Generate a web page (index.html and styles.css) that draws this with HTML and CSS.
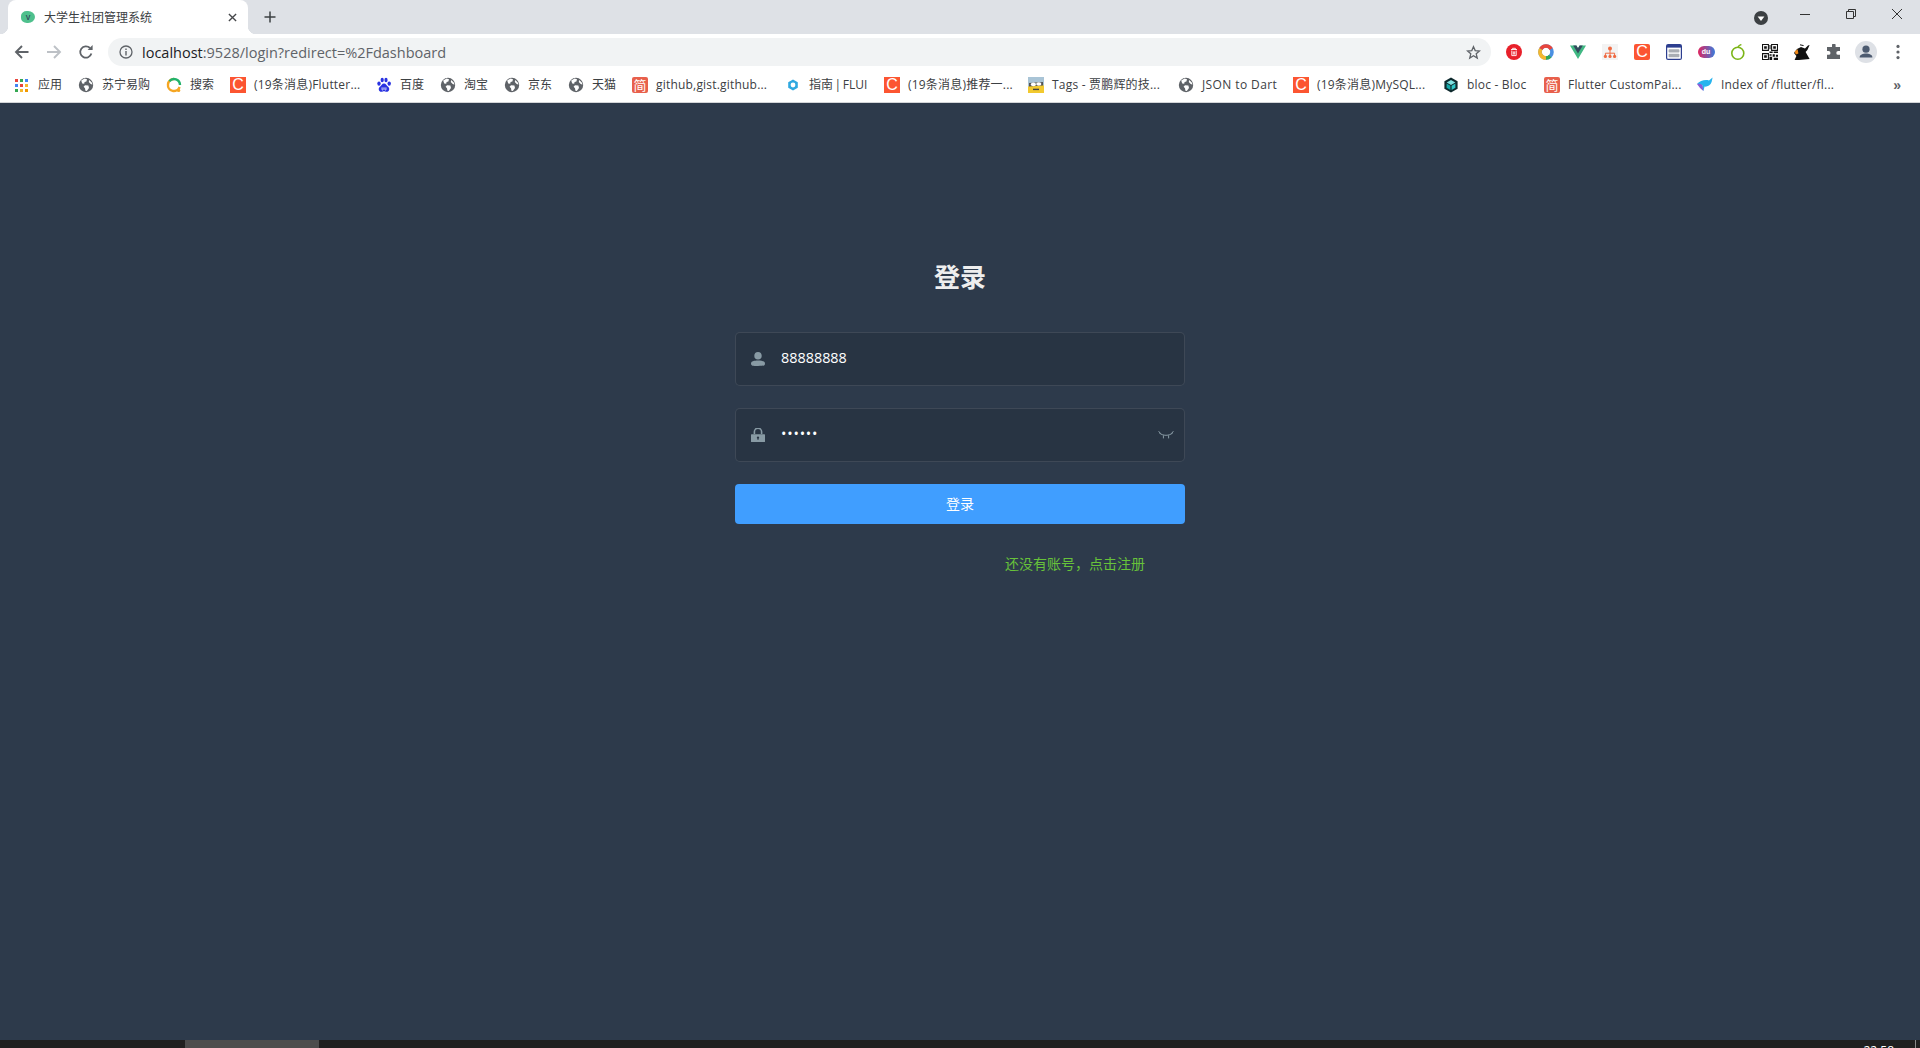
FILE: index.html
```html
<!DOCTYPE html>
<html lang="zh-CN">
<head>
<meta charset="utf-8">
<title>大学生社团管理系统</title>
<link rel="stylesheet" href="styles.css">
</head>
<body>
<svg class="defs" aria-hidden="true">
  <symbol id="globe" viewBox="0 0 16 16">
    <circle cx="8" cy="8" r="7.2" fill="#5f6368"/>
    <path d="M3.2 3.6 6.6 1.4 9 2.2 8.4 4.4 6.6 5 6.2 6.8 4.2 6.6ZM7 8.2 10.4 8.6 11 11 8.8 14 7.4 13.8 7 11.2 5.6 9.8ZM11.2 3 13.8 5.4 14.4 7.8 12.4 6.8 10.8 5Z" fill="#fff"/>
  </symbol>
</svg>
<div class="window">
  <header class="tabstrip">
    <div class="tab">
      <span class="favicon">V</span>
      <span class="tab-title">大学生社团管理系统</span>
      <svg class="tab-close" viewBox="0 0 10 10"><path d="M1 1 9 9M9 1 1 9" stroke="#45474a" stroke-width="1.5"/></svg>
    </div>
    <svg class="newtab" viewBox="0 0 12 12"><path d="M6 .5V11.5M.5 6H11.5" stroke="#3c4043" stroke-width="1.5"/></svg>
    <div class="strip-fill"></div>
    <div class="profile-dot"><svg viewBox="0 0 14 14"><circle cx="7" cy="7" r="7" fill="#3c4043"/><path d="M3.6 5.4H10.4L7 10Z" fill="#fff"/></svg></div>
    <div class="winbtn"><svg viewBox="0 0 10 10"><path d="M0 5.5H10" stroke="#333" stroke-width="1"/></svg></div>
    <div class="winbtn"><svg viewBox="0 0 10 10"><path d="M.5 2.5H7.5V9.5H.5ZM2.5 2.5V.5H9.5V7.5H7.5" fill="none" stroke="#333" stroke-width="1"/></svg></div>
    <div class="winbtn"><svg viewBox="0 0 10 10"><path d="M0 0 10 10M10 0 0 10" stroke="#333" stroke-width="1"/></svg></div>
  </header>

  <div class="toolbar">
    <div class="navbtn"><svg viewBox="0 0 16 16"><path d="M15.5 8H3M9 2 3 8 9 14" fill="none" stroke="#5f6368" stroke-width="1.9"/></svg></div>
    <div class="navbtn"><svg viewBox="0 0 16 16"><path d="M1 8H14M8 2 14 8 8 14" fill="none" stroke="#bdc1c6" stroke-width="1.9"/></svg></div>
    <div class="navbtn"><svg viewBox="0 0 16 16"><path d="M13.4 9.6A5.7 5.7 0 1 1 12 4" fill="none" stroke="#5f6368" stroke-width="1.8"/><path d="M9.6 6H14.6V1Z" fill="#5f6368"/></svg></div>
    <div class="omnibox">
      <svg class="info" viewBox="0 0 14 14"><circle cx="7" cy="7" r="6" fill="none" stroke="#5f6368" stroke-width="1.3"/><path d="M7 6V10.4M7 3.4V5" stroke="#5f6368" stroke-width="1.4"/></svg>
      <span class="url"><span class="host">localhost</span>:9528/login?redirect=%2Fdashboard</span>
      <svg class="star" viewBox="0 0 16 16"><path d="M8 1.8 9.8 6 14.4 6.4 10.9 9.4 12 13.9 8 11.5 4 13.9 5.1 9.4 1.6 6.4 6.2 6Z" fill="none" stroke="#5f6368" stroke-width="1.4"/></svg>
    </div>
    <div class="exts">
      <div class="ext"><svg viewBox="0 0 16 16"><circle cx="8" cy="8" r="8" fill="#e8202a"/><path d="M5 5.5H11M6.6 5.5V4.3H9.4V5.5M5.8 6.5V11.6H10.2V6.5M7.3 7.4V10.6M8.7 7.4V10.6" fill="none" stroke="#fff" stroke-width=".9"/></svg></div>
      <div class="ext"><svg viewBox="0 0 16 16"><circle cx="8" cy="8" r="6" fill="none" stroke="#4a90e2" stroke-width="3.6"/><path d="M2.8 5A6 6 0 0 1 13.2 5" fill="none" stroke="#e8453c" stroke-width="3.6"/><path d="M2.8 5A6 6 0 0 0 8 14" fill="none" stroke="#f5b82e" stroke-width="3.6"/><path d="M8 14A6 6 0 0 0 12.2 12.2" fill="none" stroke="#34a853" stroke-width="3.6"/></svg></div>
      <div class="ext"><svg viewBox="0 0 16 16"><path d="M0 1.5H6.4L8 4.2 9.6 1.5H16L8 15Z" fill="#41b883"/><path d="M3.2 1.5H6.4L8 4.2 9.6 1.5H12.8L8 9.6Z" fill="#35495e"/></svg></div>
      <div class="ext"><svg viewBox="0 0 16 16"><rect width="16" height="16" fill="#f3f3f3"/><path d="M8 6V9M3.4 12V9.2H12.6V12M8 9.2V12" fill="none" stroke="#ef6a42" stroke-width="1"/><circle cx="8" cy="4.4" r="2" fill="#ef6a42"/><circle cx="3.4" cy="12.4" r="1.6" fill="#ef6a42"/><circle cx="8" cy="12.4" r="1.6" fill="#ef6a42"/><circle cx="12.6" cy="12.4" r="1.6" fill="#ef6a42"/></svg></div>
      <div class="ext"><span class="csdn csdn-ext">C</span></div>
      <div class="ext"><svg viewBox="0 0 16 16"><rect x=".6" y=".6" width="14.8" height="14.8" rx="1.5" fill="#fff" stroke="#2c3e8f" stroke-width="1.2"/><rect x="1" y="1" width="14" height="2.6" fill="#2c3e8f"/><rect x="2.6" y="5.2" width="10.8" height="3.4" rx=".8" fill="#a9adb3"/><rect x="2.6" y="9.8" width="10.8" height="3.4" rx=".8" fill="#a9adb3"/></svg></div>
      <div class="ext"><span class="du">du</span></div>
      <div class="ext"><svg viewBox="0 0 16 16"><circle cx="7.8" cy="9.2" r="6" fill="none" stroke="#7cb518" stroke-width="1.6"/><path d="M8 3.4C8.4 2 9.4 1 11.4.6" fill="none" stroke="#7cb518" stroke-width="1.5"/></svg></div>
      <div class="ext"><svg viewBox="0 0 15 15"><path d="M.5.5H6V6H.5ZM9 .5H14.5V6H9ZM.5 9H6V14.5H.5Z" fill="none" stroke="#111" stroke-width="1"/><path d="M2 2H4.5V4.5H2ZM10.5 2H13V4.5H10.5ZM2 10.5H4.5V13H2ZM7 1H8V5H7ZM7 7H10V8.5H7ZM11 7H15V8.5H11ZM7 9.5H9V11H7ZM10 9.5H12V12H10ZM13 10H15V12H13ZM7 12H9.5V15H7ZM11 13H15V15H11Z" fill="#111"/></svg></div>
      <div class="ext"><svg viewBox="0 0 16 16"><path d="M0 9 3 5 7 3 11 4.6 14 1.6 15.6 1 13.4 6 11.6 8 15.6 15 5 16 .6 16 2.4 12Z" fill="#111"/><path d="M.6 7.6 3.6 5.2 4.4 9.4 1.8 10.6Z" fill="#ef8a1a"/><path d="M6 .8 9.6 1.6" stroke="#111" stroke-width="1"/></svg></div>
      <div class="ext"><svg viewBox="0 0 16 16"><path d="M6 1.2A1.8 1.8 0 0 1 9.6 1.2V3H14V7H12.2A1.9 1.9 0 0 0 12.2 10.8H14V15H1V10.8H2.6A1.9 1.9 0 0 0 2.6 7H1V3H6Z" fill="#5f6368"/></svg></div>
      <div class="ext"><span class="avatar"><svg viewBox="0 0 22 22"><circle cx="11" cy="8.2" r="3.6" fill="#4d5b70"/><path d="M4.6 16.4C4.6 13.4 8 12.4 11 12.4S17.4 13.4 17.4 16.4Z" fill="#4d5b70"/></svg></span></div>
      <div class="ext"><svg viewBox="0 0 4 16"><circle cx="2" cy="2.4" r="1.6" fill="#5f6368"/><circle cx="2" cy="8" r="1.6" fill="#5f6368"/><circle cx="2" cy="13.6" r="1.6" fill="#5f6368"/></svg></div>
    </div>
  </div>

  <nav class="bookmarks">
    <a class="bm"><svg class="bm-icon apps" viewBox="0 0 13 13"><g><rect width="3" height="3" fill="#e8453c"/><rect x="5" width="3" height="3" fill="#34a853"/><rect x="10" width="3" height="3" fill="#4285f4"/><rect y="5" width="3" height="3" fill="#4285f4"/><rect x="5" y="5" width="3" height="3" fill="#e8453c"/><rect x="10" y="5" width="3" height="3" fill="#f5b82e"/><rect y="10" width="3" height="3" fill="#34a853"/><rect x="5" y="10" width="3" height="3" fill="#f5b82e"/><rect x="10" y="10" width="3" height="3" fill="#f29900"/></g></svg><span class="bm-text w24">应用</span></a>
    <a class="bm"><svg class="bm-icon"><use href="#globe"/></svg><span class="bm-text w48">苏宁易购</span></a>
    <a class="bm"><svg class="bm-icon" viewBox="0 0 16 16"><path d="M8 2A6 6 0 1 0 13.6 10" fill="none" stroke="#f5a623" stroke-width="2.4"/><path d="M3.4 4.2A6 6 0 0 1 14 8" fill="none" stroke="#21b26b" stroke-width="2.4"/><circle cx="12.6" cy="13.4" r="1.7" fill="#f5a623"/></svg><span class="bm-text w24">搜索</span></a>
    <a class="bm"><span class="csdn">C</span><span class="bm-text latin w106">(19条消息)Flutter...</span></a>
    <a class="bm"><svg class="bm-icon" viewBox="0 0 16 16"><g fill="#2932e1"><ellipse cx="3" cy="6.6" rx="1.7" ry="2.2"/><ellipse cx="6.2" cy="3" rx="1.6" ry="2.3"/><ellipse cx="10" cy="3" rx="1.6" ry="2.3"/><ellipse cx="13.2" cy="6.6" rx="1.7" ry="2.2"/><path d="M8 6.4C10 6.4 10.6 8.6 12.4 10 14.2 11.8 13 15 10.6 14.8 9.4 14.7 9 14.2 8 14.2S6.6 14.7 5.4 14.8C3 15 1.8 11.8 3.6 10 5.4 8.6 6 6.4 8 6.4Z"/></g><path d="M6 10.4V12.4C6 13.4 7.2 13.4 7.2 12.4V10.4M8.8 10.4V12.4C8.8 13.4 10 13.4 10 12.4V10.4" stroke="#fff" stroke-width=".7" fill="none"/></svg><span class="bm-text w24">百度</span></a>
    <a class="bm"><svg class="bm-icon"><use href="#globe"/></svg><span class="bm-text w24">淘宝</span></a>
    <a class="bm"><svg class="bm-icon"><use href="#globe"/></svg><span class="bm-text w24">京东</span></a>
    <a class="bm"><svg class="bm-icon"><use href="#globe"/></svg><span class="bm-text w24">天猫</span></a>
    <a class="bm"><span class="jian">简</span><span class="bm-text latin w113">github,gist.github...</span></a>
    <a class="bm"><svg class="bm-icon" viewBox="0 0 16 16"><path d="M8 2.4 12.8 5.2V10.8L8 13.6 3.2 10.8V5.2Z" fill="#2fa8e0"/><circle cx="8" cy="8" r="2.4" fill="#fff"/></svg><span class="bm-text tight w59">指南 | FLUI</span></a>
    <a class="bm"><span class="csdn">C</span><span class="bm-text latin w104">(19条消息)推荐一...</span></a>
    <a class="bm"><svg class="bm-icon" viewBox="0 0 16 16"><rect width="16" height="16" fill="#a9c4d6"/><path d="M0 16V10C3 5 12 4 16 9V16Z" fill="#f2c92f"/><path d="M1 6 15 5V8.4L1 9.4Z" fill="#555"/><ellipse cx="5.4" cy="7.4" rx="2.6" ry="1.8" fill="#fff"/><ellipse cx="10.8" cy="7" rx="2.6" ry="1.8" fill="#fff"/><path d="M5 12.4H11" stroke="#444" stroke-width="1.4"/></svg><span class="bm-text latin w110">Tags - 贾鹏辉的技...</span></a>
    <a class="bm"><svg class="bm-icon"><use href="#globe"/></svg><span class="bm-text wide w75">JSON to Dart</span></a>
    <a class="bm"><span class="csdn">C</span><span class="bm-text latin w110">(19条消息)MySQL...</span></a>
    <a class="bm"><svg class="bm-icon" viewBox="0 0 16 16"><path d="M8 .4 14.6 4.2V11.8L8 15.6 1.4 11.8V4.2Z" fill="#0f2a2e"/><path d="M8 3 12.4 5.5 8 8 3.6 5.5Z" fill="#7fe3e3"/><path d="M3.6 6.6 7.4 8.8V13L3.6 10.8Z" fill="#14a9a9"/><path d="M12.4 6.6 8.6 8.8V13L12.4 10.8Z" fill="#2cc6c6"/></svg><span class="bm-text latin w61">bloc - Bloc</span></a>
    <a class="bm"><span class="jian">简</span><span class="bm-text latin w113">Flutter CustomPai...</span></a>
    <a class="bm"><svg class="bm-icon" viewBox="0 0 16 16"><path d="M0 7C3 3.4 8 2.4 12 3.4L15.6 .6 14.6 5C13.6 8.4 10 10 7.6 9.6L6.4 14C5 12 5 10 5.4 8.2 3.4 7.4 1.6 7 0 7Z" fill="#27b4ee"/><path d="M0 7C2 6.6 4 7 5.4 8.2L6.4 14C4 12 2 10 0 7Z" fill="#8a5cd6"/></svg><span class="bm-text latin w113">Index of /flutter/fl...</span></a>
    <span class="bm-more">»</span>
  </nav>

  <main class="login">
    <form class="login-form">
      <h3 class="title">登录</h3>
      <div class="field">
        <svg class="field-icon" viewBox="0 0 14 14"><ellipse cx="7" cy="3.8" rx="3.7" ry="3.8" fill="#889aa4"/><path d="M0 11.4C0 9.2 3 8.4 7 8.4S14 9.2 14 11.4 12.6 14 7 14 0 13.6 0 11.4Z" fill="#889aa4"/></svg>
        <input class="field-input" type="text" value="88888888" aria-label="用户名">
      </div>
      <div class="field">
        <svg class="field-icon" viewBox="0 0 14 14"><path d="M3.4 6V3.8A3.6 3.6 0 0 1 10.6 3.8V6" fill="none" stroke="#889aa4" stroke-width="1.6"/><path fill-rule="evenodd" d="M.6 6.2H13.4C13.8 6.2 14 6.4 14 6.8V13.4C14 13.8 13.8 14 13.4 14H.6C.2 14 0 13.8 0 13.4V6.8C0 6.4.2 6.2.6 6.2ZM7 8.4A1.2 1.2 0 0 0 6.4 10.6V11.8H7.6V10.6A1.2 1.2 0 0 0 7 8.4Z" fill="#889aa4"/></svg>
        <input class="field-input field-password" type="password" value="123456" aria-label="密码">
        <svg class="eye" viewBox="0 0 16 8"><path d="M1 1.6C4.6 5.2 11.4 5.2 15 1.6M.6 .2 2.8 2.8M15.4 .2 13.2 2.8M5.4 4.4V7.4M10.6 4.4V7.4" fill="none" stroke="#889aa4" stroke-width="1"/></svg>
      </div>
      <button class="submit" type="button">登录</button>
      <div class="register"><a class="register-link">还没有账号，点击注册</a></div>
    </form>
  </main>

  <footer class="taskbar">
    <span class="task-active"></span>
    <span class="task-fill"></span>
    <span class="clock">22:58</span>
    <span class="task-edge"></span>
  </footer>
</div>
</body>
</html>
```

FILE: styles.css
```css
* { box-sizing: border-box; }
html, body { margin: 0; height: 100%; }
body { font-family: "Open Sans", "Noto Sans CJK SC", sans-serif; overflow: hidden; }
.defs { display: none; }
.window { display: flex; flex-direction: column; height: 100vh; overflow: hidden; }

/* tab strip */
.tabstrip { display: flex; align-items: center; height: 34px; flex: none; padding-left: 8px; background: #dee1e6; }
.tab { position: relative; display: flex; align-items: center; width: 240px; height: 34px; padding: 0 11px 0 13px; background: #fff; border-radius: 8px 8px 0 0; }
.tab::before, .tab::after { content: ""; position: absolute; bottom: 0; width: 8px; height: 8px; }
.tab::before { left: -8px; background: radial-gradient(circle at 0 0, #dee1e6 8px, #fff 8.5px); }
.tab::after { right: -8px; background: radial-gradient(circle at 100% 0, #dee1e6 8px, #fff 8.5px); }
.favicon { display: flex; align-items: center; justify-content: center; width: 14px; height: 12px; margin-right: 9px; border-radius: 50% 60% 60% 50%; background: #4fc08d; color: #35495e; font: 700 7px/1 "Liberation Sans", sans-serif; }
.tab-title { flex: 1; font: 12px/16px "Noto Sans CJK SC", sans-serif; color: #3c4043; white-space: nowrap; }
.tab-close { width: 9px; height: 9px; }
.newtab { width: 12px; height: 12px; margin-left: 16px; }
.strip-fill { flex: 1; }
.profile-dot { width: 14px; height: 14px; margin-right: 14px; margin-top: 1px; }
.profile-dot svg { display: block; }
.winbtn { display: flex; justify-content: center; width: 46px; height: 30px; padding-top: 9px; margin-bottom: 4px; }
.winbtn svg { width: 10px; height: 10px; }

/* toolbar */
.toolbar { display: flex; align-items: center; height: 33px; flex: none; padding: 3px 6px 0 5px; background: #fff; }
.navbtn { display: flex; align-items: center; justify-content: center; width: 32.5px; height: 28px; }
.navbtn svg { width: 16px; height: 16px; }
.omnibox { flex: 1; display: flex; align-items: center; height: 28px; margin-left: 5.5px; padding: 0 10px 0 11px; border-radius: 14px; background: #f1f3f4; }
.info { width: 14px; height: 14px; margin-right: 9px; }
.url { flex: 1; font-size: 14.5px; color: #5f6368; white-space: nowrap; }
.host { color: #202124; }
.star { width: 15px; height: 15px; }
.exts { display: flex; margin-left: 7px; }
.ext { display: flex; align-items: center; justify-content: center; width: 32px; height: 28px; }
.ext svg { width: 16px; height: 16px; }
.ext .avatar svg { width: 22px; height: 22px; display: block; }
.avatar { width: 22px; height: 22px; border-radius: 50%; background: #dee1e6; }
.du { display: block; width: 17px; height: 12px; border-radius: 6px; background: linear-gradient(90deg, #e0245e, #3b7bdb); color: #fff; font: 700 7px/12px "Liberation Sans", sans-serif; text-align: center; }
.csdn-ext { border-radius: 2px; }

/* bookmarks */
.bookmarks { display: flex; align-items: center; height: 36px; flex: none; padding: 1px 0 0 15px; background: #fff; border-bottom: 1px solid #d3d5d8; }
.bm { display: flex; align-items: center; margin-right: 16px; }
.bm-icon { width: 16px; height: 16px; margin-right: 8px; flex: none; }
.apps { width: 13px; height: 13px; margin-right: 10px; }
.bm-text { font-size: 12px; line-height: 16px; color: #3c4043; white-space: nowrap; }
.latin { letter-spacing: .2px; }
.wide { letter-spacing: .4px; }
.tight { word-spacing: -1.5px; }
.w24 { width: 24px; } .w48 { width: 48px; } .w59 { width: 59px; } .w61 { width: 61px; } .w75 { width: 75px; }
.w104 { width: 104px; } .w106 { width: 106px; } .w110 { width: 110px; } .w113 { width: 113px; }
.csdn { display: flex; align-items: center; justify-content: center; width: 16px; height: 16px; margin-right: 8px; background: #fc5531; color: #fff; font: 16px/16px "Liberation Sans", sans-serif; }
.ext .csdn { margin-right: 0; }
.jian { display: flex; align-items: center; justify-content: center; width: 16px; height: 16px; margin-right: 8px; border-radius: 2px; background: #e8604c; color: #fff; font: 13px/16px "Noto Sans CJK SC", sans-serif; }
.bm-more { margin-left: auto; margin-right: 19px; font: 700 14px/16px "Liberation Sans", sans-serif; color: #5f6368; }

/* login */
.login { flex: 1; min-height: 0; padding-top: 158px; background: #2d3a4b; }
.login-form { width: 450px; margin: 0 auto; }
.title { margin: 0 0 42px; font: 700 26px/29px "Noto Sans CJK SC", sans-serif; color: #eee; text-align: center; }
.field { display: flex; align-items: center; height: 54px; margin-bottom: 22px; border: 1px solid rgba(255, 255, 255, .1); border-radius: 5px; background: rgba(0, 0, 0, .1); }
.field-icon { width: 14px; height: 14px; margin-left: 15px; flex: none; }
.field-input { flex: 1; min-width: 0; height: 100%; padding: 0 0 3px 16px; border: 0; outline: 0; background: transparent; color: #fff; font: 14.4px "Open Sans", sans-serif; }
.field-password { letter-spacing: .8px; }
.eye { width: 16px; height: 8px; margin-right: 10px; flex: none; }
.submit { display: block; width: 100%; height: 40px; padding: 0 0 2px; border: 0; border-radius: 4px; background: #409eff; color: #fff; font: 14px "Noto Sans CJK SC", sans-serif; }
.register { display: flex; justify-content: flex-end; margin-top: 29px; padding-right: 40px; }
.register-link { font: 14px/20px "Noto Sans CJK SC", sans-serif; color: #67c23a; }

/* taskbar */
.taskbar { display: flex; height: 8px; flex: none; overflow: hidden; background: #202020; }
.task-active { width: 134px; margin-left: 185px; background: #4d4d4d; }
.task-fill { flex: 1; }
.clock { margin-right: 21px; font: 12px/8px "Open Sans", sans-serif; color: #fff; padding-top: 7px; height: 8px; }
.task-edge { width: 1px; margin-right: 4px; background: #8a8a8a; }
```
